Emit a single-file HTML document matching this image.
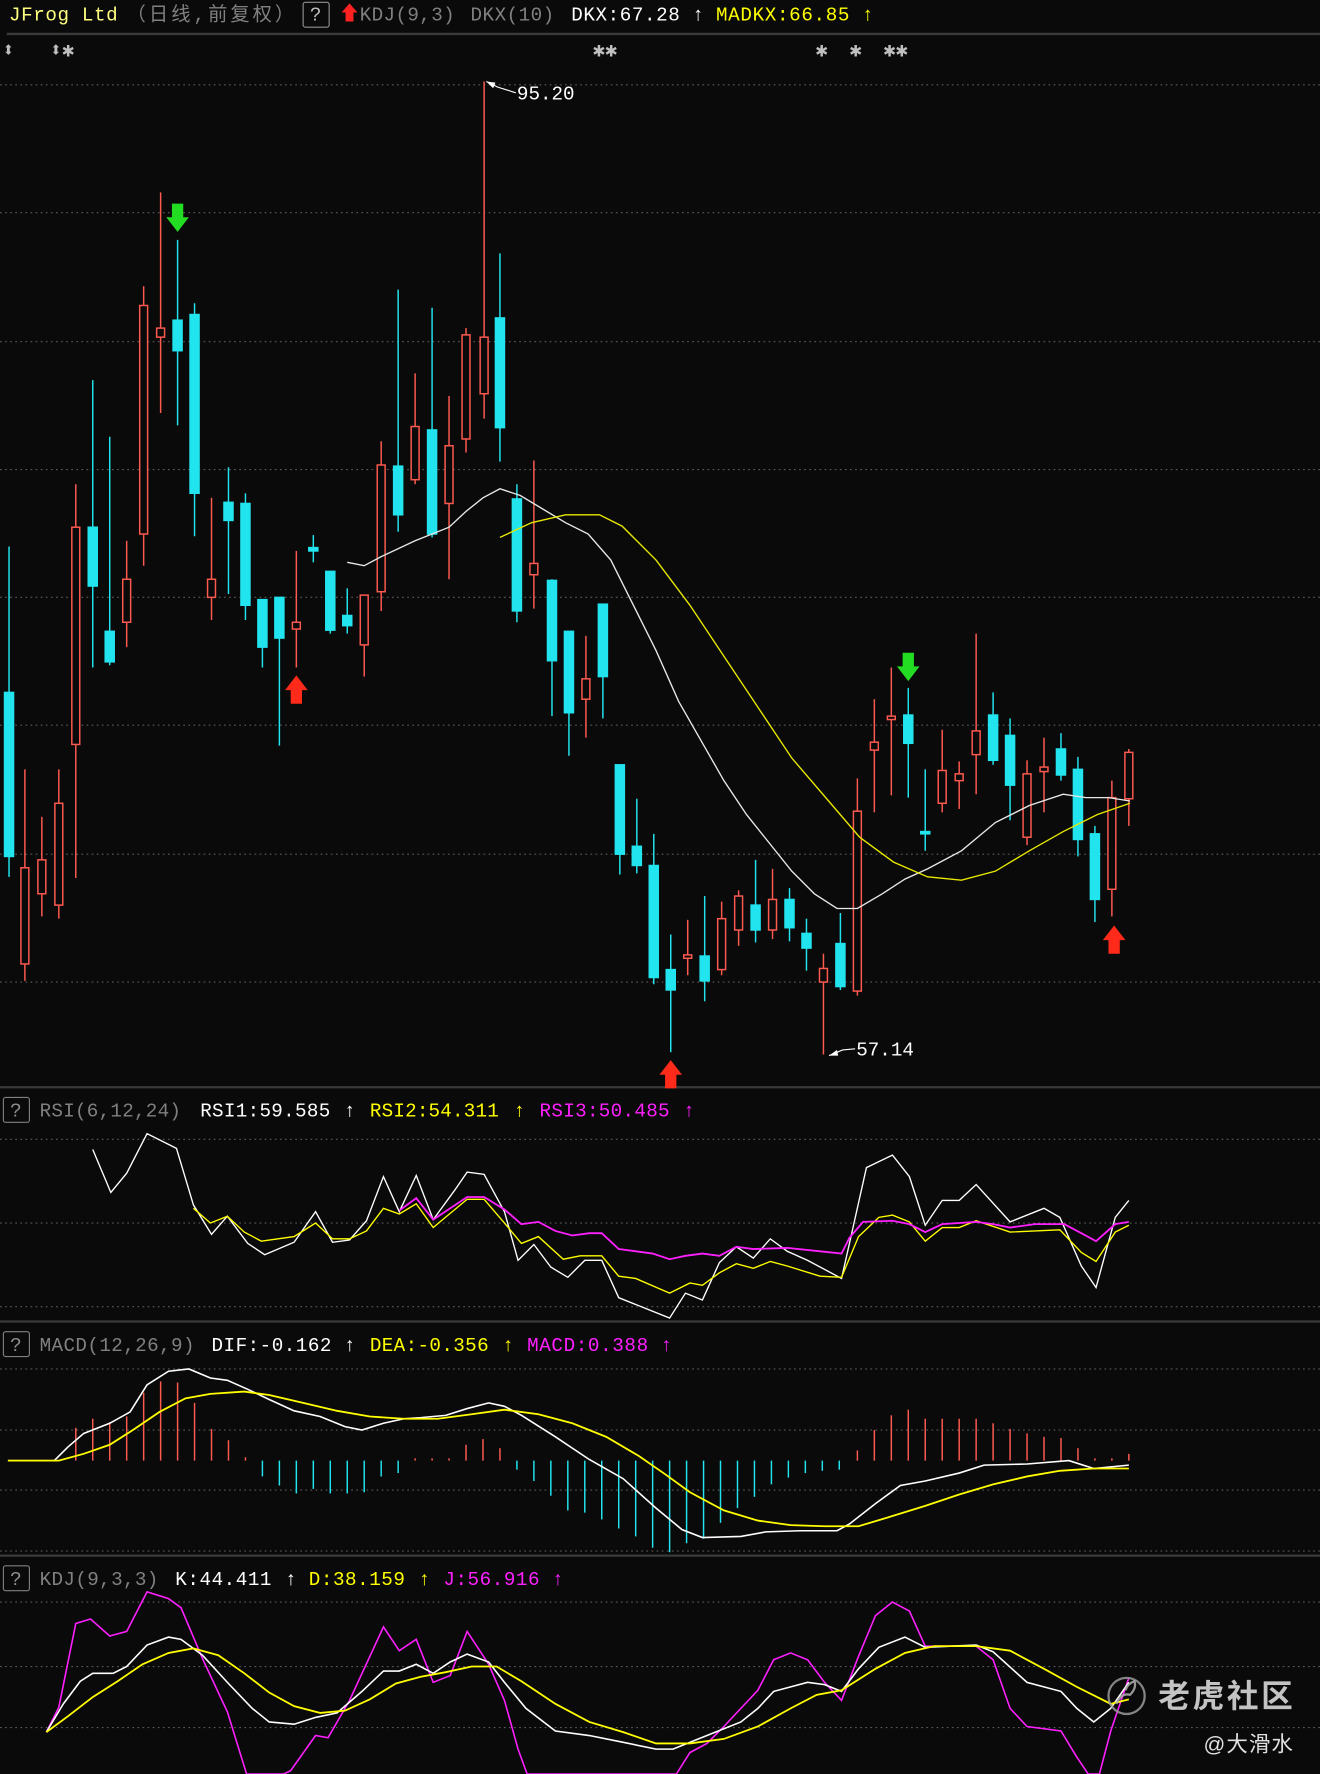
<!DOCTYPE html>
<html><head><meta charset="utf-8"><style>
html,body{margin:0;padding:0;background:#0a0a0a;}
svg{display:block;}
text{font-family:"Liberation Mono","Noto Sans CJK SC",monospace;font-size:17px;}
</style></head><body>
<svg width="1320" height="1774" viewBox="0 0 1167 1568" preserveAspectRatio="none" xmlns="http://www.w3.org/2000/svg">
<rect width="1167" height="1568" fill="#0a0a0a"/>
<g stroke="#3a3a3a" stroke-width="2">
<line x1="6" y1="30" x2="1167" y2="30"/>
<line x1="0" y1="961" x2="1167" y2="961"/>
<line x1="0" y1="1168" x2="1167" y2="1168"/>
<line x1="0" y1="1375" x2="1167" y2="1375"/>
</g>
<g stroke="#5a5a5a" stroke-width="1" stroke-dasharray="1.5,3">
<line x1="0" y1="75" x2="1167" y2="75"/><line x1="0" y1="188" x2="1167" y2="188"/>
<line x1="0" y1="302" x2="1167" y2="302"/><line x1="0" y1="415" x2="1167" y2="415"/>
<line x1="0" y1="528" x2="1167" y2="528"/><line x1="0" y1="641" x2="1167" y2="641"/>
<line x1="0" y1="755" x2="1167" y2="755"/><line x1="0" y1="868" x2="1167" y2="868"/>
<line x1="0" y1="1007" x2="1167" y2="1007"/><line x1="0" y1="1081" x2="1167" y2="1081"/>
<line x1="0" y1="1155" x2="1167" y2="1155"/>
<line x1="0" y1="1210" x2="1167" y2="1210"/><line x1="0" y1="1264" x2="1167" y2="1264"/>
<line x1="0" y1="1317" x2="1167" y2="1317"/><line x1="0" y1="1371" x2="1167" y2="1371"/>
<line x1="0" y1="1416" x2="1167" y2="1416"/><line x1="0" y1="1473" x2="1167" y2="1473"/>
<line x1="0" y1="1527" x2="1167" y2="1527"/>
</g>
<text x="8" y="18" fill="#ffff80" textLength="96">JFrog Ltd</text>
<text x="112" y="18" fill="#808080" textLength="148">（日线,前复权）</text>
<rect x="268" y="2" width="23" height="22" fill="none" stroke="#909090" rx="2"/>
<text x="274" y="18" fill="#c0c0c0">?</text>
<polygon points="309,3 316,11 312.5,11 312.5,19 305.5,19 305.5,11 302,11" fill="#ff2020"/>
<text x="318" y="18" fill="#808080" textLength="84">KDJ(9,3)</text>
<text x="416" y="18" fill="#808080" textLength="74">DKX(10)</text>
<text x="505" y="18" fill="#ffffff" textLength="96">DKX:67.28</text>
<text x="612" y="18" fill="#ffffff">↑</text>
<text x="633" y="18" fill="#ffff00" textLength="118">MADKX:66.85</text>
<text x="762" y="18" fill="#ffff00">↑</text>
<g fill="#c0c0c0">
<text x="2" y="50" style="font-size:18px;font-weight:bold">⬍</text>
<text x="44" y="50" style="font-size:18px;font-weight:bold">⬍✱</text>
<text x="524" y="50" style="font-size:18px;font-weight:bold">✱✱</text>
<text x="721" y="50" style="font-size:18px;font-weight:bold">✱</text>
<text x="751" y="50" style="font-size:18px;font-weight:bold">✱</text>
<text x="781" y="50" style="font-size:18px;font-weight:bold">✱✱</text>
</g>
<g stroke="#22e4ee" fill="#22e4ee" stroke-width="1.3">
<line x1="8" y1="483" x2="8" y2="775"/><rect x="4" y="612" width="8" height="145"/>
<line x1="82" y1="336" x2="82" y2="590"/><rect x="78" y="466" width="8" height="52"/>
<line x1="97" y1="386" x2="97" y2="588"/><rect x="93" y="558" width="8" height="27"/>
<line x1="157" y1="212" x2="157" y2="376"/><rect x="153" y="283" width="8" height="27"/>
<line x1="172" y1="268" x2="172" y2="474"/><rect x="168" y="278" width="8" height="158"/>
<line x1="202" y1="413" x2="202" y2="525"/><rect x="198" y="444" width="8" height="16"/>
<line x1="217" y1="436" x2="217" y2="548"/><rect x="213" y="445" width="8" height="90"/>
<line x1="232" y1="530" x2="232" y2="590"/><rect x="228" y="530" width="8" height="42"/>
<line x1="247" y1="528" x2="247" y2="659"/><rect x="243" y="528" width="8" height="36"/>
<line x1="277" y1="473" x2="277" y2="497"/><rect x="273" y="484" width="8" height="3"/>
<line x1="292" y1="505" x2="292" y2="560"/><rect x="288" y="505" width="8" height="52"/>
<line x1="307" y1="520" x2="307" y2="560"/><rect x="303" y="544" width="8" height="9"/>
<line x1="352" y1="256" x2="352" y2="470"/><rect x="348" y="412" width="8" height="43"/>
<line x1="382" y1="272" x2="382" y2="475"/><rect x="378" y="380" width="8" height="92"/>
<line x1="442" y1="224" x2="442" y2="408"/><rect x="438" y="281" width="8" height="97"/>
<line x1="457" y1="428" x2="457" y2="550"/><rect x="453" y="441" width="8" height="99"/>
<line x1="488" y1="512" x2="488" y2="633"/><rect x="484" y="513" width="8" height="71"/>
<line x1="503" y1="558" x2="503" y2="668"/><rect x="499" y="558" width="8" height="72"/>
<line x1="533" y1="534" x2="533" y2="635"/><rect x="529" y="534" width="8" height="64"/>
<line x1="548" y1="676" x2="548" y2="773"/><rect x="544" y="676" width="8" height="79"/>
<line x1="563" y1="706" x2="563" y2="772"/><rect x="559" y="748" width="8" height="17"/>
<line x1="578" y1="737" x2="578" y2="870"/><rect x="574" y="765" width="8" height="99"/>
<line x1="593" y1="826" x2="593" y2="930"/><rect x="589" y="857" width="8" height="18"/>
<line x1="623" y1="792" x2="623" y2="885"/><rect x="619" y="845" width="8" height="22"/>
<line x1="668" y1="760" x2="668" y2="833"/><rect x="664" y="800" width="8" height="22"/>
<line x1="698" y1="785" x2="698" y2="832"/><rect x="694" y="795" width="8" height="25"/>
<line x1="713" y1="812" x2="713" y2="858"/><rect x="709" y="825" width="8" height="13"/>
<line x1="743" y1="807" x2="743" y2="875"/><rect x="739" y="834" width="8" height="38"/>
<line x1="803" y1="608" x2="803" y2="705"/><rect x="799" y="632" width="8" height="25"/>
<line x1="818" y1="680" x2="818" y2="752"/><rect x="814" y="735" width="8" height="2"/>
<line x1="878" y1="612" x2="878" y2="676"/><rect x="874" y="632" width="8" height="40"/>
<line x1="893" y1="635" x2="893" y2="725"/><rect x="889" y="650" width="8" height="44"/>
<line x1="938" y1="648" x2="938" y2="690"/><rect x="934" y="662" width="8" height="23"/>
<line x1="953" y1="669" x2="953" y2="757"/><rect x="949" y="680" width="8" height="62"/>
<line x1="968" y1="730" x2="968" y2="815"/><rect x="964" y="737" width="8" height="58"/>
</g>
<g stroke="#ff5a50" fill="#0a0a0a" stroke-width="1.3">
<line x1="22" y1="680" x2="22" y2="867"/><rect x="18.5" y="767" width="7" height="85"/>
<line x1="37" y1="722" x2="37" y2="810"/><rect x="33.5" y="760" width="7" height="30"/>
<line x1="52" y1="680" x2="52" y2="812"/><rect x="48.5" y="710" width="7" height="90"/>
<line x1="67" y1="428" x2="67" y2="776"/><rect x="63.5" y="466" width="7" height="192"/>
<line x1="112" y1="478" x2="112" y2="572"/><rect x="108.5" y="512" width="7" height="38"/>
<line x1="127" y1="253" x2="127" y2="500"/><rect x="123.5" y="270" width="7" height="202"/>
<line x1="142" y1="170" x2="142" y2="365"/><rect x="138.5" y="290" width="7" height="8"/>
<line x1="187" y1="440" x2="187" y2="548"/><rect x="183.5" y="512" width="7" height="16"/>
<line x1="262" y1="487" x2="262" y2="590"/><rect x="258.5" y="550" width="7" height="6"/>
<line x1="322" y1="526" x2="322" y2="598"/><rect x="318.5" y="526" width="7" height="44"/>
<line x1="337" y1="390" x2="337" y2="540"/><rect x="333.5" y="411" width="7" height="112"/>
<line x1="367" y1="330" x2="367" y2="428"/><rect x="363.5" y="377" width="7" height="47"/>
<line x1="397" y1="350" x2="397" y2="512"/><rect x="393.5" y="394" width="7" height="51"/>
<line x1="412" y1="290" x2="412" y2="400"/><rect x="408.5" y="296" width="7" height="92"/>
<line x1="428" y1="72" x2="428" y2="370"/><rect x="424.5" y="298" width="7" height="50"/>
<line x1="472" y1="407" x2="472" y2="538"/><rect x="468.5" y="498" width="7" height="10"/>
<line x1="518" y1="562" x2="518" y2="652"/><rect x="514.5" y="600" width="7" height="18"/>
<line x1="608" y1="813" x2="608" y2="862"/><rect x="604.5" y="844" width="7" height="3"/>
<line x1="638" y1="797" x2="638" y2="862"/><rect x="634.5" y="812" width="7" height="45"/>
<line x1="653" y1="787" x2="653" y2="836"/><rect x="649.5" y="792" width="7" height="30"/>
<line x1="683" y1="768" x2="683" y2="830"/><rect x="679.5" y="795" width="7" height="27"/>
<line x1="728" y1="843" x2="728" y2="932"/><rect x="724.5" y="856" width="7" height="12"/>
<line x1="758" y1="688" x2="758" y2="880"/><rect x="754.5" y="717" width="7" height="159"/>
<line x1="773" y1="618" x2="773" y2="718"/><rect x="769.5" y="656" width="7" height="7"/>
<line x1="788" y1="590" x2="788" y2="703"/><rect x="784.5" y="633" width="7" height="3"/>
<line x1="833" y1="645" x2="833" y2="718"/><rect x="829.5" y="681" width="7" height="29"/>
<line x1="848" y1="673" x2="848" y2="715"/><rect x="844.5" y="684" width="7" height="6"/>
<line x1="863" y1="560" x2="863" y2="702"/><rect x="859.5" y="646" width="7" height="21"/>
<line x1="908" y1="672" x2="908" y2="747"/><rect x="904.5" y="684" width="7" height="56"/>
<line x1="923" y1="652" x2="923" y2="718"/><rect x="919.5" y="678" width="7" height="4"/>
<line x1="983" y1="690" x2="983" y2="810"/><rect x="979.5" y="705" width="7" height="81"/>
<line x1="998" y1="662" x2="998" y2="730"/><rect x="994.5" y="665" width="7" height="41"/>
</g>
<polyline fill="none" stroke="#e8e8e8" stroke-width="1.2" points="307,497 322,500 337,492 367,478 397,466 412,452 427,440 442,432 460,438 480,450 500,462 520,472 540,495 560,535 580,575 600,620 620,655 640,690 660,720 680,745 700,770 720,790 740,803 758,803 780,790 800,777 820,768 850,752 880,727 910,712 940,702 960,705 980,705 999,708"/>
<polyline fill="none" stroke="#e8e800" stroke-width="1.2" points="442,475 470,462 500,455 530,455 550,465 580,495 610,535 640,580 670,625 700,670 730,705 760,740 790,762 820,775 850,778 880,770 910,752 940,735 970,720 999,710"/>
<g fill="#22dd22"><polygon points="152,180 162,180 162,192 167,192 157,205 147,192 152,192"/><polygon points="798,577 808,577 808,589 813,589 803,602 793,589 798,589"/></g>
<g fill="#ff2a1a"><polygon points="262,597 272,610 267,610 267,622 257,622 257,610 252,610"/><polygon points="593,937 603,950 598,950 598,962 588,962 588,950 583,950"/><polygon points="985,818 995,831 990,831 990,843 980,843 980,831 975,831"/></g>
<polyline points="430,72 440,77 456,82" fill="none" stroke="#fff" stroke-width="1"/><polygon points="430,72 438,73 436,78" fill="#fff"/>
<text x="457" y="88" fill="#ffffff">95.20</text>
<polyline points="733,933 745,928 756,927" fill="none" stroke="#fff" stroke-width="1"/><polygon points="733,933 740,928 741,933" fill="#fff"/>
<text x="757" y="933" fill="#ffffff">57.14</text>
<rect x="3" y="970" width="23" height="22" fill="none" stroke="#808080" rx="2"/>
<text x="9" y="987" fill="#909090">?</text>
<text x="35" y="987" fill="#808080" textLength="125">RSI(6,12,24)</text>
<text x="177" y="987" fill="#ffffff" textLength="115">RSI1:59.585</text><text x="304" y="987" fill="#fff">↑</text>
<text x="327" y="987" fill="#ffff00" textLength="114">RSI2:54.311</text><text x="454" y="987" fill="#ffff00">↑</text>
<text x="477" y="987" fill="#ff20ff" textLength="115">RSI3:50.485</text><text x="604" y="987" fill="#ff20ff">↑</text>
<polyline fill="none" stroke="#fff" stroke-width="1.2" points="82,1016 98,1054 112,1037 130,1002 156,1015 171,1065 187,1091 201,1075 219,1099 234,1109 260,1098 279,1071 294,1098 309,1096 324,1079 339,1040 353,1071 368,1039 383,1078 402,1052 413,1036 428,1038 446,1071 458,1114 472,1100 487,1120 502,1129 517,1114 532,1114 547,1147 577,1159 592,1165 606,1143 621,1149 636,1116 651,1102 666,1112 681,1095 696,1106 714,1114 744,1130 751,1099 766,1032 789,1021 804,1040 818,1083 833,1061 848,1061 863,1047 893,1080 923,1068 937,1076 956,1119 969,1138 986,1076 998,1061"/>
<polyline fill="none" stroke="#ffff00" stroke-width="1.2" points="171,1068 186,1081 201,1075 216,1089 231,1097 260,1093 279,1081 294,1095 309,1095 324,1088 339,1068 353,1073 368,1064 383,1085 413,1060 428,1060 446,1081 461,1099 476,1093 498,1113 513,1110 532,1110 547,1128 562,1130 592,1143 610,1134 621,1136 636,1125 651,1117 666,1121 681,1115 696,1119 725,1128 744,1129 759,1093 777,1076 789,1074 804,1080 818,1097 833,1085 848,1085 863,1079 893,1089 937,1087 956,1107 969,1115 986,1089 998,1083"/>
<polyline fill="none" stroke="#ff20ff" stroke-width="1.6" points="353,1070 368,1059 383,1078 413,1058 428,1058 446,1069 461,1082 476,1080 491,1088 506,1092 521,1090 532,1090 547,1104 577,1108 592,1113 606,1110 621,1108 636,1110 651,1102 666,1104 696,1103 725,1106 744,1108 751,1094 763,1080 789,1079 804,1082 818,1089 833,1082 863,1080 878,1082 893,1085 915,1082 941,1082 956,1090 969,1097 986,1082 998,1080"/>
<rect x="3" y="1177" width="23" height="22" fill="none" stroke="#808080" rx="2"/>
<text x="9" y="1194" fill="#909090">?</text>
<text x="35" y="1194" fill="#808080" textLength="137">MACD(12,26,9)</text>
<text x="187" y="1194" fill="#ffffff" textLength="106">DIF:-0.162</text><text x="304" y="1194" fill="#fff">↑</text>
<text x="327" y="1194" fill="#ffff00" textLength="105">DEA:-0.356</text><text x="444" y="1194" fill="#ffff00">↑</text>
<text x="466" y="1194" fill="#ff20ff" textLength="107">MACD:0.388</text><text x="584" y="1194" fill="#ff20ff">↑</text>
<g stroke="#ff5a50" stroke-width="1.3">
<line x1="67" y1="1291" x2="67" y2="1262"/><line x1="82" y1="1291" x2="82" y2="1254"/><line x1="97" y1="1291" x2="97" y2="1257"/><line x1="112" y1="1291" x2="112" y2="1252"/><line x1="127" y1="1291" x2="127" y2="1231"/><line x1="142" y1="1291" x2="142" y2="1221"/><line x1="157" y1="1291" x2="157" y2="1222"/><line x1="172" y1="1291" x2="172" y2="1240"/><line x1="187" y1="1291" x2="187" y2="1263"/><line x1="202" y1="1291" x2="202" y2="1273"/><line x1="217" y1="1291" x2="217" y2="1288"/>
<line x1="367" y1="1291" x2="367" y2="1289"/><line x1="382" y1="1291" x2="382" y2="1289"/><line x1="397" y1="1291" x2="397" y2="1289"/><line x1="412" y1="1291" x2="412" y2="1277"/><line x1="427" y1="1291" x2="427" y2="1272"/><line x1="442" y1="1291" x2="442" y2="1280"/>
<line x1="758" y1="1291" x2="758" y2="1282"/><line x1="773" y1="1291" x2="773" y2="1264"/><line x1="788" y1="1291" x2="788" y2="1251"/><line x1="803" y1="1291" x2="803" y2="1246"/><line x1="818" y1="1291" x2="818" y2="1254"/><line x1="833" y1="1291" x2="833" y2="1254"/><line x1="848" y1="1291" x2="848" y2="1254"/><line x1="863" y1="1291" x2="863" y2="1254"/><line x1="878" y1="1291" x2="878" y2="1258"/><line x1="893" y1="1291" x2="893" y2="1263"/><line x1="908" y1="1291" x2="908" y2="1267"/><line x1="923" y1="1291" x2="923" y2="1270"/><line x1="938" y1="1291" x2="938" y2="1271"/><line x1="953" y1="1291" x2="953" y2="1280"/><line x1="968" y1="1291" x2="968" y2="1289"/><line x1="983" y1="1291" x2="983" y2="1289"/><line x1="998" y1="1291" x2="998" y2="1285"/>
</g>
<g stroke="#22e4ee" stroke-width="1.3">
<line x1="232" y1="1291" x2="232" y2="1305"/><line x1="247" y1="1291" x2="247" y2="1313"/><line x1="262" y1="1291" x2="262" y2="1320"/><line x1="277" y1="1291" x2="277" y2="1316"/><line x1="292" y1="1291" x2="292" y2="1320"/><line x1="307" y1="1291" x2="307" y2="1320"/><line x1="322" y1="1291" x2="322" y2="1319"/><line x1="337" y1="1291" x2="337" y2="1305"/><line x1="352" y1="1291" x2="352" y2="1302"/>
<line x1="457" y1="1291" x2="457" y2="1299"/><line x1="472" y1="1291" x2="472" y2="1309"/><line x1="487" y1="1291" x2="487" y2="1322"/><line x1="502" y1="1291" x2="502" y2="1335"/><line x1="517" y1="1291" x2="517" y2="1337"/><line x1="532" y1="1291" x2="532" y2="1343"/><line x1="547" y1="1291" x2="547" y2="1351"/><line x1="562" y1="1291" x2="562" y2="1358"/><line x1="577" y1="1291" x2="577" y2="1368"/><line x1="592" y1="1291" x2="592" y2="1372"/><line x1="607" y1="1291" x2="607" y2="1364"/><line x1="622" y1="1291" x2="622" y2="1360"/><line x1="637" y1="1291" x2="637" y2="1346"/><line x1="652" y1="1291" x2="652" y2="1333"/><line x1="667" y1="1291" x2="667" y2="1323"/><line x1="682" y1="1291" x2="682" y2="1312"/><line x1="697" y1="1291" x2="697" y2="1306"/><line x1="712" y1="1291" x2="712" y2="1302"/><line x1="727" y1="1291" x2="727" y2="1300"/><line x1="742" y1="1291" x2="742" y2="1299"/>
</g>
<polyline fill="none" stroke="#fff" stroke-width="1.4" points="7,1291 48,1291 60,1279 74,1267 97,1258 115,1248 130,1224 149,1212 167,1210 186,1218 201,1220 219,1228 238,1237 260,1247 283,1252 305,1261 320,1264 339,1258 357,1254 372,1253 394,1251 413,1245 432,1240 446,1243 461,1251 491,1270 521,1290 551,1307 580,1333 603,1352 621,1359 655,1358 677,1354 707,1353 740,1353 751,1347 774,1329 796,1313 818,1309 848,1302 870,1295 908,1294 945,1291 967,1298 998,1295"/>
<polyline fill="none" stroke="#ffff00" stroke-width="1.6" points="7,1291 52,1291 74,1285 97,1277 119,1263 141,1248 164,1236 186,1232 216,1230 238,1233 268,1240 298,1247 327,1252 357,1254 387,1254 417,1250 446,1246 476,1250 506,1258 536,1270 565,1287 588,1303 610,1319 640,1335 670,1344 699,1348 729,1349 759,1349 789,1340 818,1331 848,1321 878,1312 908,1305 937,1300 967,1298 998,1298"/>
<rect x="3" y="1384" width="23" height="22" fill="none" stroke="#808080" rx="2"/>
<text x="9" y="1401" fill="#909090">?</text>
<text x="35" y="1401" fill="#808080" textLength="105">KDJ(9,3,3)</text>
<text x="155" y="1401" fill="#ffffff" textLength="85">K:44.411</text><text x="252" y="1401" fill="#fff">↑</text>
<text x="273" y="1401" fill="#ffff00" textLength="85">D:38.159</text><text x="370" y="1401" fill="#ffff00">↑</text>
<text x="392" y="1401" fill="#ff20ff" textLength="85">J:56.916</text><text x="488" y="1401" fill="#ff20ff">↑</text>
<polyline fill="none" stroke="#ff20ff" stroke-width="1.4" points="41,1531 52,1509 67,1435 80,1431 97,1446 112,1442 130,1407 149,1413 160,1421 179,1466 201,1513 218,1568 251,1568 257,1565 279,1534 290,1536 309,1503 339,1438 353,1459 368,1449 383,1487 398,1481 413,1442 432,1471 446,1503 458,1546 466,1568 598,1568 610,1549 625,1541 640,1526 655,1510 670,1494 684,1467 699,1461 714,1467 729,1487 744,1503 759,1464 774,1428 789,1416 804,1424 818,1455 863,1455 878,1467 893,1510 908,1526 938,1530 952,1553 962,1568 972,1568 982,1530 998,1483"/>
<polyline fill="none" stroke="#fff" stroke-width="1.4" points="41,1531 56,1506 71,1486 82,1479 100,1479 112,1473 130,1454 149,1447 160,1449 179,1463 201,1487 223,1510 238,1522 260,1524 279,1518 298,1514 320,1495 339,1477 353,1477 368,1471 383,1479 398,1469 413,1462 432,1469 446,1487 465,1510 491,1530 521,1534 551,1540 580,1546 595,1546 625,1534 655,1522 670,1510 684,1495 714,1487 729,1489 744,1495 759,1475 777,1456 800,1447 818,1456 863,1454 878,1460 908,1487 938,1495 952,1510 967,1522 982,1510 998,1487"/>
<polyline fill="none" stroke="#ffff00" stroke-width="1.6" points="41,1531 60,1517 82,1500 104,1486 126,1471 149,1461 171,1457 193,1463 216,1479 238,1496 260,1508 283,1514 305,1512 327,1502 350,1488 372,1482 394,1478 417,1473 439,1473 461,1486 491,1506 521,1522 551,1531 580,1541 610,1541 640,1537 670,1526 699,1510 722,1498 744,1494 774,1475 800,1461 826,1455 863,1455 893,1459 923,1475 952,1491 982,1506 998,1502"/>
<circle cx="996" cy="1499" r="16" fill="none" stroke="#9a9a9a" stroke-width="2" opacity="0.85"/>
<path d="M987,1506 q4,-10 12,-8 q6,-6 4,-12 q-6,2 -8,8" fill="none" stroke="#b0b0b0" stroke-width="2" opacity="0.85"/>
<text x="1024" y="1509" fill="#d8d8d8" style="font-family:'Noto Sans CJK SC',sans-serif;font-size:28px;font-weight:bold" textLength="119" opacity="0.9">老虎社区</text>
<text x="1064" y="1548" fill="#e0e0e0" style="font-family:'Liberation Sans','Noto Sans CJK SC',sans-serif;font-size:19px" textLength="79">@大滑水</text>
</svg>
</body></html>
